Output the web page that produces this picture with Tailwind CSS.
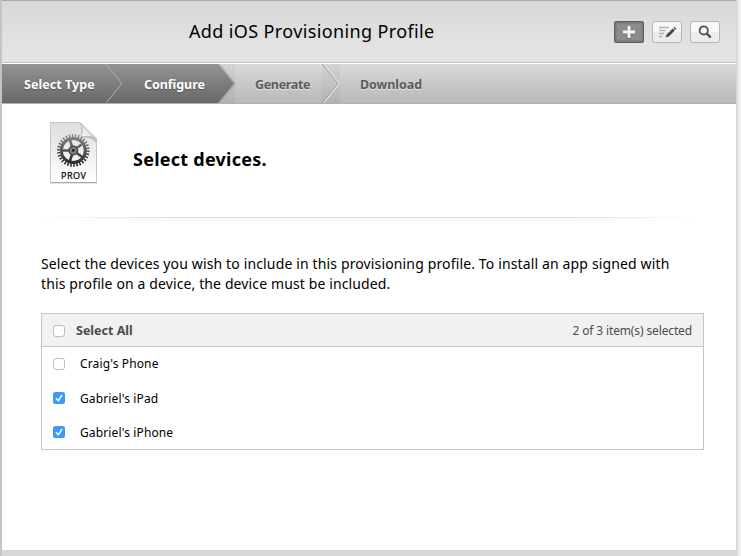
<!DOCTYPE html>
<html lang="en">
<head>
<meta charset="utf-8">
<title>Add iOS Provisioning Profile</title>
<script src="https://cdn.jsdelivr.net/npm/@tailwindcss/browser@4"></script>
</head>
<body class="w-[741px] h-[556px] overflow-hidden bg-[#f0f0f0] font-['Noto_Sans','Open_Sans',sans-serif] text-black">
<div class="w-[738px] h-[556px] flex flex-col bg-white border-l-2 border-l-[#c4c4c4] border-r-2 border-r-[#dadada] whitespace-nowrap">
  <header class="h-[63px] shrink-0 flex items-center border-t border-t-[#a9a9a9] border-b border-b-[#c0c0c0] bg-linear-to-b from-[#d8d8d8] to-[#e6e6e6] pl-[187px] pr-[16px]">
    <h1 class="text-[18px] leading-[24px] tracking-[0.37px] pb-[2px]">Add iOS Provisioning Profile</h1>
    <div class="ml-auto flex gap-[8px]">
      <button class="w-[30px] h-[22px] rounded-[2px] border border-[#5f5f5f] bg-[#8c8c8c] shadow-[inset_0_0_3px_#555] flex items-center justify-center">
        <svg width="16" height="16" viewBox="0 0 16 16"><path d="M8 3v12M2 9h12" stroke="#555" stroke-width="3" opacity=".5"/><path d="M8 2v12M2 8h12" stroke="#f6f6f6" stroke-width="2.8"/></svg>
      </button>
      <button class="w-[30px] h-[22px] rounded-[3px] border border-[#b5b5b5] bg-linear-to-b from-[#f8f8f8] from-50% to-[#ececec] to-50% flex items-center justify-center">
        <svg width="20" height="14" viewBox="0 0 20 14"><path d="M2 2.500h10M2 5.500h7M2 8.500h5M2 11.500h3" stroke="#b2b2b2" stroke-width="1.400"/><path d="M8.600 12.600l1.100-3.200 6-6 2.100 2.100-6 6z" fill="#484848"/><path d="M16.300 2.800l1-1 2.100 2.100-1 1z" fill="#484848"/></svg>
      </button>
      <button class="w-[30px] h-[22px] rounded-[3px] border border-[#b5b5b5] bg-linear-to-b from-[#f8f8f8] from-50% to-[#ececec] to-50% flex items-center justify-center">
        <svg width="14" height="14" viewBox="0 0 14 14" fill="none" stroke="#505050"><circle cx="5.700" cy="5.400" r="4.100" stroke-width="1.800"/><path d="M8.800 8.600l3.900 3.900" stroke-width="2.400"/></svg>
      </button>
    </div>
  </header>
  <nav class="relative h-[41px] shrink-0 border-t border-t-white border-b border-b-[#b0b0b0] bg-linear-to-b from-[#dadada] to-[#b8b8b8]">
    <svg class="absolute left-0 top-0" width="350" height="39" viewBox="0 0 350 39" fill="none">
      <defs>
        <linearGradient id="dark" x1="0" y1="0" x2="0" y2="1"><stop stop-color="#939393"/><stop offset="1" stop-color="#686868"/></linearGradient>
      </defs>
      <path d="M216 0h17v39h-17zM320 0h18v39h-18z" fill="#000" opacity=".03"/>
      <path d="M217 0l16 19.500-16 19.500" stroke="#999" stroke-width="1.500" opacity=".6"/>
      <path d="M0 0h216l16 19.500L216 39H0z" fill="url(#dark)"/>
      <path d="M104 0l16 19.500L104 39" stroke="#b0b0b0"/>
      <path d="M321.500 0l15.500 19.500-15.500 19.500" stroke="#eee" stroke-width="1.300"/>
      <path d="M320.500 0l15.500 19.500-15.500 19.500" stroke="#999"/>
    </svg>
    <ol class="relative flex h-[39px] items-center pt-[3px] text-[12.500px] font-bold text-[#5c5c5c] [text-shadow:0_1px_0_#e4e4e4]">
      <li class="w-[120px] pl-[22px] text-white tracking-[0.06px] [text-shadow:0_1px_1px_#555]">Select Type</li>
      <li class="w-[111px] pl-[22px] text-white tracking-[-0.06px] [text-shadow:0_1px_1px_#555]">Configure</li>
      <li class="w-[105px] pl-[22px] tracking-[-0.33px]">Generate</li>
      <li class="pl-[22px] tracking-[-0.06px]">Download</li>
    </ol>
  </nav>
  <main class="flex-1 pl-[39px] pr-[31px]">
    <section class="h-[113px] flex">
      <svg class="mt-[17px] ml-[7px]" width="52" height="66" viewBox="0 0 52 66">
        <defs>
          <linearGradient id="paper" x1="0" y1="0" x2="0" y2="1"><stop stop-color="#dedede"/><stop offset="1" stop-color="#fff"/></linearGradient>
          <linearGradient id="gear" gradientUnits="userSpaceOnUse" x1="0" y1="-16" x2="0" y2="16"><stop stop-color="#8c8c8c"/><stop offset=".5" stop-color="#555"/><stop offset="1" stop-color="#1e1e1e"/></linearGradient>
          <linearGradient id="fold" x1="0" y1="1" x2="1" y2="0"><stop stop-color="#fff"/><stop offset=".5" stop-color="#e2e2e2"/><stop offset="1" stop-color="#aaa"/></linearGradient>
        </defs>
        <path d="M2 20v43h47V20z" fill="#000" opacity=".1"/>
        <path d="M2.500 1.500h29.500l16.500 16.500v43.500h-46z" fill="url(#paper)" stroke="#c8c8c8"/>
        <path d="M2.500 61.500h46" stroke="#a8a8a8"/>
        <path d="M33 5l1 12q9-1 14 5V18z" fill="#777" opacity=".3"/>
        <path d="M31.500 1.500c3 3 3 8 2 14.500 6-1 12-.8 15 2z" fill="url(#fold)" stroke="#aaa" stroke-width=".7"/>
        <g transform="translate(25.300 29.500)" fill="none" stroke="url(#gear)">
          <circle r="14.600" stroke-width="3.400" pathLength="60" stroke-dasharray="1 1"/>
          <circle r="12" stroke-width="2.900"/>
          <path d="M.01 0L-11 .01M0 0l-3.400-10.500M0 0l8.900-6.500M0 0l8.900 6.500M0 0l-3.400 10.500" stroke-width="2.600"/>
          <circle r="4.300" fill="#808080" stroke="#484848" stroke-width="1.500"/><circle r="1.400" fill="#222" stroke="none"/>
        </g>
        <text x="13" y="58" font-family="Noto Sans" font-size="9" textLength="25" fill="#000" stroke="#000" stroke-width=".2">PROV</text>
      </svg>
      <h2 class="ml-[33px] mt-[43px] text-[18px] leading-[24px] font-bold tracking-[0.25px]">Select devices.</h2>
    </section>
    <div class="h-px w-[658px] bg-[linear-gradient(to_right,transparent,#dedede_20%,#dedede_80%,transparent)]"></div>
    <div class="h-[3px] w-[658px] bg-[linear-gradient(to_right,transparent,#f7f7f7_20%,#f7f7f7_80%,transparent)]"></div>
    <p class="mt-[33px] text-[14px] leading-[20px] tracking-[0.14px]">Select the devices you wish to include in this provisioning profile. To install an app signed with<br><span class="tracking-[0.12px]">this profile on a device, the device must be included.</span></p>
    <section class="mt-[19px] w-[663px] h-[137px] border border-[#c6c6c6] text-[12px]">
      <div class="h-[33px] flex items-center bg-[#f1f1f1] border-b border-[#c6c6c6] pl-[11px] pr-[11px] text-[#4c4c4c]">
        <span class="size-[12px] mt-[2px] rounded-[3px] border border-[#bdbdbd] bg-white"></span>
        <b class="ml-[11px] pt-[3px] text-[12.500px]">Select All</b>
        <span class="ml-auto pt-[2px] tracking-[-0.13px]">2 of 3 item(s) selected</span>
      </div>
      <div class="h-[34px] flex items-center pl-[11px]"><span class="size-[12px] rounded-[3px] border border-[#bdbdbd]"></span><span class="ml-[15px] tracking-[0.13px]">Craig's Phone</span></div>
      <div class="h-[34px] flex items-center pl-[11px]"><svg width="12" height="12"><rect width="12" height="12" rx="2.500" fill="#3b99fc"/><path d="M3 6.300l2.300 2.500L9 3" stroke="#fff" stroke-width="1.500" fill="none"/></svg><span class="ml-[15px] pt-px tracking-[0.13px]">Gabriel's iPad</span></div>
      <div class="h-[34px] flex items-center pl-[11px]"><svg width="12" height="12"><rect width="12" height="12" rx="2.500" fill="#3b99fc"/><path d="M3 6.300l2.300 2.500L9 3" stroke="#fff" stroke-width="1.500" fill="none"/></svg><span class="ml-[15px] pt-px tracking-[0.13px]">Gabriel's iPhone</span></div>
    </section>
  </main>
  <footer class="h-[6px] shrink-0 bg-[#d6d7d7]"></footer>
</div>
</body>
</html>
